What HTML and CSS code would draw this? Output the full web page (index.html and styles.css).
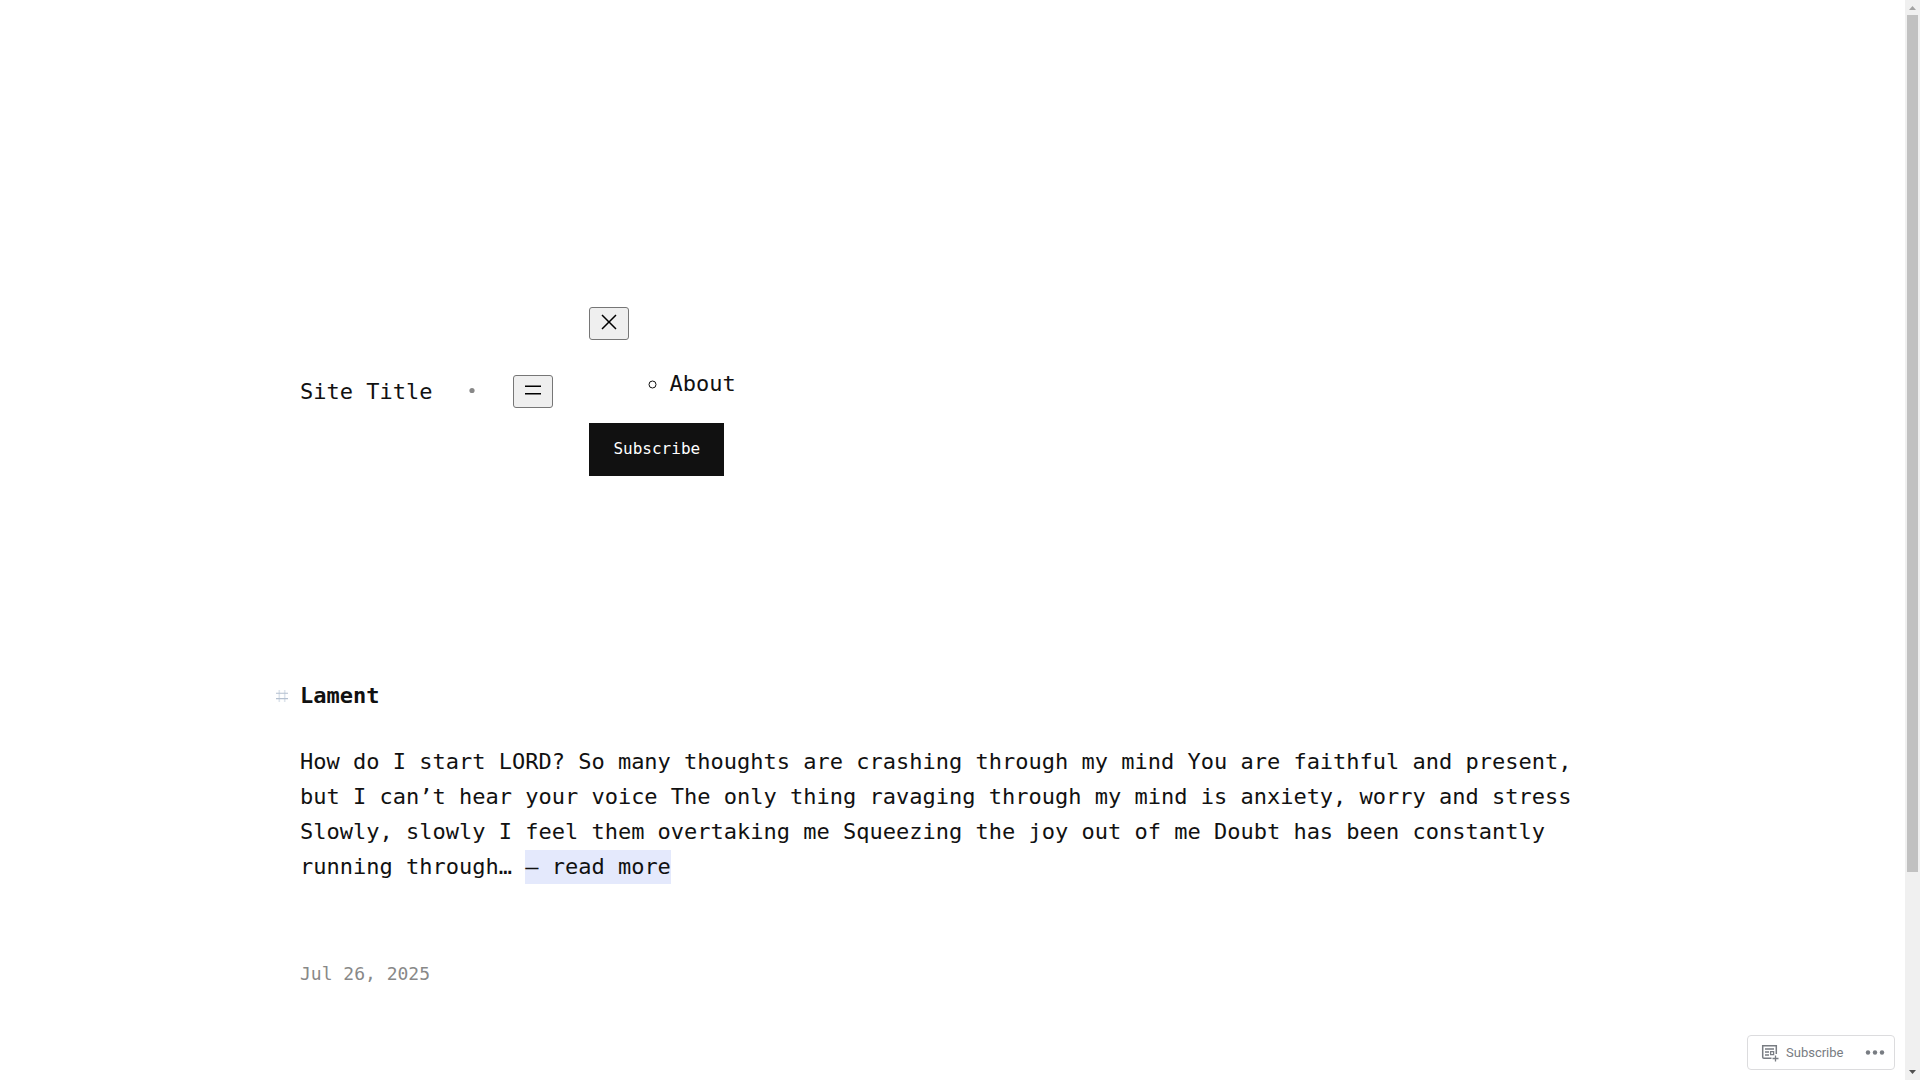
FILE: index.html
```
<!DOCTYPE html>
<html lang="en">
<head>
	<meta charset="utf-8">
	<title>Site Title</title>
	<link rel="stylesheet" href="styles.css">
</head>
<body>

	<header class="site-header">
		<a class="site-title" href="#">Site Title</a>
		<svg class="dot" width="9" height="9" viewBox="0 0 9 9"><circle cx="4" cy="3.5" r="2.6" /></svg>
		<button class="menu-button" type="button" aria-label="Open menu">
			<svg width="24" height="24" viewBox="0 0 24 24"><path d="M4 7.5h16v1.5H4zM4 15h16v1.5H4z" /></svg>
		</button>
		<nav class="menu">
			<button class="menu-button" type="button" aria-label="Close menu">
				<svg width="24" height="24" viewBox="0 0 24 24"><path d="m13.06 12 6.47-6.47-1.06-1.06L12 10.94 5.53 4.47 4.47 5.53 10.94 12l-6.47 6.47 1.06 1.06L12 13.06l6.47 6.47 1.06-1.06L13.06 12Z" /></svg>
			</button>
			<ul class="menu-list">
				<li><a href="#">About</a></li>
			</ul>
			<button class="subscribe" type="button">Subscribe</button>
		</nav>
	</header>

	<main class="posts">
		<article>
			<h2 class="post-title">
				<svg class="hash" width="12" height="12" viewBox="0 0 12 12"><path stroke="#dde4ec" stroke-width="1.6" d="M3.300 0v12M8.700 0v12" /><path stroke="#b4c0d0" stroke-width="1.100" d="M0 3.200h12M0 8.600h12" /></svg>
				<a href="#">Lament</a>
			</h2>
			<p class="excerpt">How do I start LORD? So many thoughts are crashing through my mind You are faithful and present, but I can’t hear your voice The only thing ravaging through my mind is anxiety, worry and stress Slowly, slowly I feel them overtaking me Squeezing the joy out of me Doubt has been constantly running through… <a class="more" href="#">— read more</a></p>
			<a class="date" href="#"><time datetime="2025-07-26">Jul 26, 2025</time></a>
		</article>
	</main>

	<div class="actionbar">
		<button class="follow" type="button">
			<svg width="18" height="18" viewBox="0 0 18 18">
				<path fill="none" stroke="currentColor" stroke-width="1.500" d="M10.500 14.300H3Q1.700 14.300 1.700 13V1.700H15.300V10" />
				<path fill="none" stroke="currentColor" stroke-width="1.300" d="M4 5h9M4 8h4M4 11h4M9.600 7.600h3v3h-3zM14.500 11.500v6M11.500 14.500h6" />
			</svg>
			Subscribe
		</button>
		<button class="more-actions" type="button" aria-label="More">
			<svg width="20" height="6" viewBox="0 0 20 6"><circle cx="3" cy="2.500" r="2.200" /><circle cx="10" cy="2.500" r="2.200" /><circle cx="17" cy="2.500" r="2.200" /></svg>
		</button>
	</div>

	<div class="scrollbar">
		<svg width="15" height="15" viewBox="0 0 15 15"><path fill="#a3a3a3" d="M4 10h7L7.500 6z" /></svg>
		<div class="track"><div class="thumb"></div></div>
		<svg width="15" height="15" viewBox="0 0 15 15"><path fill="#505050" d="M4 5h7L7.500 9z" /></svg>
	</div>

</body>
</html>
```
FILE: styles.css
```
body {
	margin:0;
	padding:307px 315px 0 300px;
	background:#fff;
	color:#111;
	font:22px/35px "DejaVu Sans Mono", monospace;
}

a { color:inherit; text-decoration:none; }

.site-header { display:flex; align-items:center; gap:36px; }
.dot { fill:#888; }

.menu-button {
	display:block;
	box-sizing:border-box;
	width:40px;
	height:33px;
	padding:1px 6px 5px;
	border:1px solid #767676;
	border-radius:3px;
	background:#efefef;
}
.menu-button svg { display:block; margin:auto; }

.menu-list { margin:26px 0 22px; padding-left:80px; list-style:circle; }

.subscribe {
	display:block;
	padding:13px 24px 15px;
	border:0;
	background:#111;
	color:#fff;
	font:16px/25px "DejaVu Sans Mono", monospace;
}

.posts { padding-top:202px; }

.post-title {
	display:flex;
	align-items:center;
	gap:12px;
	margin:0 0 0 -24px;
	font-size:22px;
}

.excerpt { margin:31px 0 71px; }
.more { padding:4px 0 5px; background:#e4e9fc; }
.date { color:#888; font-size:18px; }

.actionbar {
	position:fixed;
	right:25px;
	bottom:10px;
	display:flex;
	align-items:center;
	justify-content:space-between;
	box-sizing:border-box;
	width:148px;
	height:35px;
	padding:0 9px 0 13px;
	border:1px solid #dcdcde;
	border-radius:4px;
	background:#fff;
	color:#787c82;
}
.actionbar button {
	display:flex;
	align-items:center;
	gap:7px;
	padding:0;
	border:0;
	background:none;
	color:inherit;
	font:13px/18px Roboto, sans-serif;
}
.more-actions { fill:currentColor; }

.scrollbar {
	position:fixed;
	top:0;
	right:0;
	bottom:0;
	display:flex;
	flex-direction:column;
	width:15px;
	background:#f0f0f0;
}
.scrollbar svg { display:block; }
.track { flex:1; padding:0 2px; }
.thumb { height:81.6%; background:#c1c1c1; }
```
